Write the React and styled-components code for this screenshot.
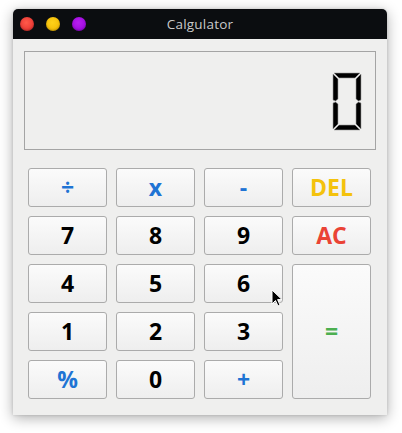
import React from "react";
import styled, { createGlobalStyle } from "styled-components";

const Global = createGlobalStyle`
  html, body { margin: 0; padding: 0; background: #ffffff; }
  body { width: 402px; height: 433px; overflow: hidden; font-family: "Open Sans", "Noto Sans", sans-serif; }
`;

const Page = styled.div`
  position: relative;
  width: 402px;
  height: 433px;
  padding: 9px 15px 0 13px;
  box-sizing: border-box;
`;

const Window = styled.div`
  width: 374px;
  height: 406px;
  background: #efefee;
  border-radius: 5px 5px 0 0;
  box-shadow: 0 3px 14px rgba(0, 0, 0, 0.32), 0 0 3px rgba(0, 0, 0, 0.15);
  display: flex;
  flex-direction: column;
  overflow: hidden;
`;

const TitleBar = styled.div`
  height: 30px;
  background: #0b0d10;
  position: relative;
  display: flex;
  align-items: center;
  justify-content: center;
  flex-shrink: 0;
`;

const Dots = styled.div`
  position: absolute;
  left: 7px;
  top: 8px;
  display: flex;
  gap: 12px;
`;

const Dot = styled.span`
  width: 14px;
  height: 14px;
  border-radius: 50%;
  background: ${(p) => p.$c};
  box-shadow: inset 0 -1px 2px rgba(0, 0, 0, 0.25);
`;

const Title = styled.div`
  color: #c9c9c9;
  font-family: "Open Sans", "Noto Sans", sans-serif;
  font-size: 13.5px;
  letter-spacing: 0.2px;
`;

const Body = styled.div`
  padding: 12px 11px 0 11px;
  display: flex;
  flex-direction: column;
`;

const Display = styled.div`
  height: 99px;
  border: 1px solid #a4a4a4;
  background: #efefee;
  display: flex;
  align-items: flex-start;
  justify-content: flex-end;
  padding: 20px 13px 0 0;
  box-sizing: border-box;
`;

const Keys = styled.div`
  margin: 18px 4px 0 4px;
  display: grid;
  grid-template-columns: repeat(4, 79px);
  grid-template-rows: repeat(5, 39px);
  gap: 9px;
`;

const Key = styled.button`
  grid-row: ${(p) => p.$rows || "auto"};
  margin: 0;
  padding: 0;
  border: 1px solid #ababab;
  border-radius: 3px;
  background: linear-gradient(#fbfbfb, #eeeeee);
  color: ${(p) => p.$color || "#000"};
  font-family: "Open Sans", "Noto Sans", sans-serif;
  font-weight: 700;
  font-size: ${(p) => p.$size || 23}px;
  line-height: 1;
  display: flex;
  align-items: center;
  justify-content: center;
  padding-bottom: 1px;
`;

const Cursor = styled.svg`
  position: absolute;
  left: 271px;
  top: 289px;
`;

const BLUE = "#1f74d4";

const Digit = () => (
  <svg width="30" height="59" viewBox="-1 -1 30 59">
    <g fill="#000" stroke="#9a9a9a" strokeWidth="0.6">
      <polygon points="1,0 27,0 22,5 6,5" />
      <polygon points="0,1 5,6 5,26 2.5,28 0,27" />
      <polygon points="28,1 28,27 25.5,28 23,26 23,6" />
      <polygon points="0,30 2.5,29 5,31 5,51 0,56" />
      <polygon points="28,30 28,56 23,51 23,31 25.5,29" />
      <polygon points="1,57 6,52 22,52 27,57" />
    </g>
  </svg>
);

export default function App() {
  return (
    <Page>
      <Global />
      <Window>
        <TitleBar>
          <Dots>
            <Dot $c="radial-gradient(circle at 45% 40%, #ff5a4a, #e02a2a)" />
            <Dot $c="radial-gradient(circle at 45% 40%, #ffd21a, #f0b400)" />
            <Dot $c="radial-gradient(circle at 45% 40%, #b820f0, #9500d8)" />
          </Dots>
          <Title>Calgulator</Title>
        </TitleBar>
        <Body>
          <Display>
            <Digit />
          </Display>
          <Keys>
            <Key $color={BLUE}>÷</Key>
            <Key $color={BLUE}>x</Key>
            <Key $color={BLUE}>-</Key>
            <Key $color="#f4c20d">DEL</Key>
            <Key>7</Key>
            <Key>8</Key>
            <Key>9</Key>
            <Key $color="#ea4335">AC</Key>
            <Key>4</Key>
            <Key>5</Key>
            <Key>6</Key>
            <Key $color="#4caf50" $rows="span 3">=</Key>
            <Key>1</Key>
            <Key>2</Key>
            <Key>3</Key>
            <Key $color={BLUE}>%</Key>
            <Key>0</Key>
            <Key $color={BLUE}>+</Key>
          </Keys>
        </Body>
      </Window>
      <Cursor width="12" height="19" viewBox="0 0 12 19">
        <path d="M1 1 L1 15 L4.5 11.5 L7 17 L9 16 L6.6 10.6 L11 10.6 Z" fill="#000" stroke="#fff" strokeWidth="1" />
      </Cursor>
    </Page>
  );
}
